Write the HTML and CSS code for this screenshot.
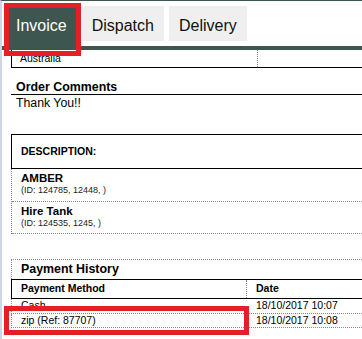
FILE: index.html
```html
<!DOCTYPE html>
<html lang="en">
<head>
    <meta charset="UTF-8">
    <meta name="viewport" content="width=device-width, initial-scale=1.0">
    <title>Invoice</title>
    <link rel="stylesheet" href="styles.css">
</head>
<body>
    <div class="frame">
        <div class="tabs">
            <div class="tab active">Invoice</div>
            <div class="tab">Dispatch</div>
            <div class="tab">Delivery</div>
        </div>
        <div class="bar"></div>

        <div class="view">
            <!-- address (scrolled up) -->
            <div class="addr">
                <div class="addr-cell">Australia</div>
                <div class="addr-cell"></div>
            </div>

            <div class="comments">
                <h3>Order Comments</h3>
                <p>Thank You!!</p>
            </div>

            <div class="desc-head">DESCRIPTION:</div>
            <div class="items">
                <div class="item">
                    <b>AMBER</b>
                    <small>(ID: 124785, 12448, )</small>
                </div>
                <div class="item">
                    <b>Hire Tank</b>
                    <small>(ID: 124535, 1245, )</small>
                </div>
            </div>

            <div class="payments">
                <h3>Payment History</h3>
                <div class="pay-row pay-head">
                    <div class="c1">Payment Method</div>
                    <div class="c2">Date</div>
                </div>
                <div class="pay-row">
                    <div class="c1">Cash</div>
                    <div class="c2">18/10/2017 10:07</div>
                </div>
                <div class="pay-row">
                    <div class="c1">zip (Ref: 87707)</div>
                    <div class="c2">18/10/2017 10:08</div>
                </div>
            </div>
        </div>
    </div>

    <!-- red highlight marks -->
    <div class="mark mark-tab"></div>
    <div class="mark mark-row"></div>
</body>
</html>
```

FILE: styles.css
```css
*{
    margin: 0;
    padding: 0;
    box-sizing: border-box;
}
body{
    font-family: "Liberation Sans", Arial, sans-serif;
    color: #000;
    background: #fff;
}
.frame{
    width: 362px;
    height: 339px;
    overflow: hidden;
    border-left: 2px solid #cdd7e6;
    border-top: 1px solid #3e5650;
}
.tabs{
    display: flex;
    gap: 5px;
    height: 45px;
    padding: 5px 0 0 4px;
}
.tab{
    height: 35px;
    padding: 5px 10px 0;
    line-height: 30px;
    font-size: 16px;
    color: #111;
    background-color: #efefef;
}
.tab.active{
    height: 40px;
    color: #fff;
    background-color: #3e5650;
}
.bar{
    height: 4px;
    background-color: #3e5650;
}
.view{
    padding-left: 9px;
    white-space: nowrap;
}
.addr{
    display: flex;
    height: 18px;
    border-left: 1px solid #000;
    border-bottom: 1px solid #000;
}
.addr-cell{
    width: 246px;
    padding: 2px 0 0 8px;
    font-size: 10.5px;
    line-height: 12px;
    border-right: 1px dotted #888;
}
.addr-cell:last-child{
    flex: 1;
    border-right: none;
}
.comments{
    margin-top: 12px;
}
.comments h3{
    padding-left: 5px;
    font-size: 12.4px;
    line-height: 14px;
    border-bottom: 1px solid #000;
}
.comments p{
    padding: 1px 0 0 5px;
    font-size: 12.3px;
    line-height: 14px;
}
.desc-head{
    margin-top: 24px;
    height: 35px;
    padding: 10px 0 0 9px;
    font-size: 10.5px;
    font-weight: bold;
    line-height: 12px;
    border: 1px solid #000;
    border-right: none;
}
.items{
    border-left: 1px dotted #888;
}
.item{
    height: 33px;
    padding: 3px 0 0 9px;
    border-bottom: 1px dotted #888;
}
.item:last-child{
    height: 32px;
}
.item b{
    display: block;
    font-size: 11.5px;
    line-height: 13px;
}
.item small{
    display: block;
    font-size: 9px;
    line-height: 11px;
    color: #222;
}
.payments{
    margin-top: 25px;
    border-top: 1px dotted #888;
}
.payments h3{
    padding: 2px 0 3px 9px;
    font-size: 12.4px;
    line-height: 14px;
    border-left: 1px dotted #888;
}
.pay-row{
    display: flex;
    height: 15px;
    font-size: 10.5px;
    line-height: 12px;
    border-left: 1px dotted #888;
    border-bottom: 1px dotted #888;
}
.pay-row:last-child{
    height: 14px;
}
.pay-row .c1{
    width: 235px;
    padding-left: 9px;
}
.pay-row .c2{
    flex: 1;
    padding-left: 9px;
}
.pay-head{
    height: 20px;
    padding-top: 2px;
    font-weight: bold;
    border: 1px solid #000;
    border-right: none;
}
.pay-head .c1{
    border-right: 1px dotted #888;
    margin-top: -2px;
    padding-top: 2px;
    height: 18px;
}
.mark{
    position: absolute;
    border: 5px solid #e3202a;
}
.mark-tab{
    left: 4px;
    top: 3px;
    width: 77px;
    height: 53px;
}
.mark-row{
    left: 4px;
    top: 306px;
    width: 245px;
    height: 29px;
}
```
